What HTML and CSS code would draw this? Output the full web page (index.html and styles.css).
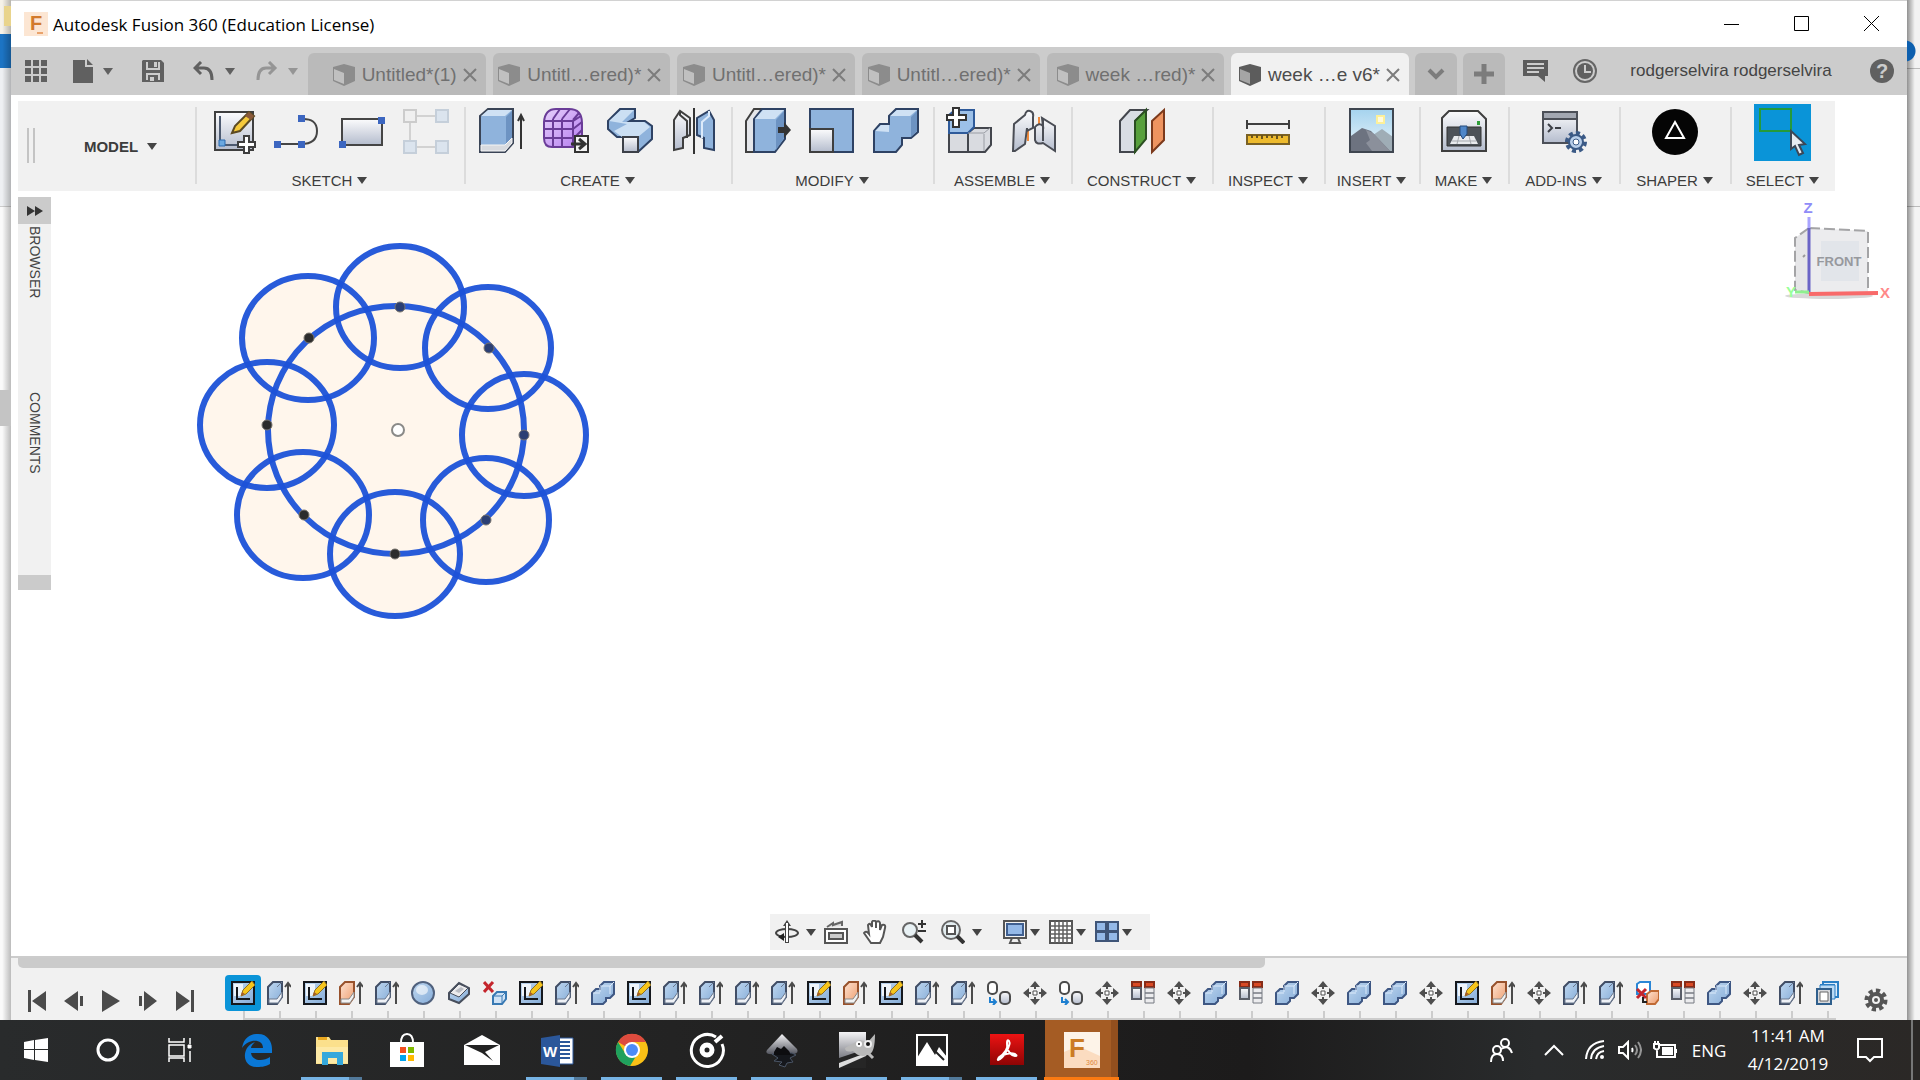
FILE: index.html
```
<!DOCTYPE html>
<html lang="en">
<head>
    <meta charset="UTF-8">
    <meta name="viewport" content="width=device-width, initial-scale=1.0">
    <title>Autodesk Fusion 360 (Education License)</title>
    <link rel="stylesheet" href="styles.css">
</head>
<body>

    <!-- Shared icon shapes -->
    <svg class="defs" aria-hidden="true">
        <defs>
            <linearGradient id="steel" x1="0" y1="0" x2="0" y2="1"><stop offset="0" stop-color="#fcfcfd"/><stop offset="1" stop-color="#b4bccd"/></linearGradient>
            <linearGradient id="blue" x1="0" y1="0" x2="1" y2="1"><stop offset="0" stop-color="#c0d8f0"/><stop offset="1" stop-color="#85acd8"/></linearGradient>
            <linearGradient id="orange" x1="0" y1="0" x2="1" y2="1"><stop offset="0" stop-color="#fde3d2"/><stop offset="1" stop-color="#ee9c6c"/></linearGradient>
            <linearGradient id="purple" x1="0" y1="0" x2="1" y2="1"><stop offset="0" stop-color="#e6d0fb"/><stop offset="1" stop-color="#b67df0"/></linearGradient>
            <linearGradient id="sky" x1="0" y1="0" x2="0" y2="1"><stop offset="0" stop-color="#a5d3ee"/><stop offset="1" stop-color="#eaf5fa"/></linearGradient>
            <linearGradient id="red" x1="0" y1="0" x2="0" y2="1"><stop offset="0" stop-color="#ec1313"/><stop offset="1" stop-color="#8e0404"/></linearGradient>
            <linearGradient id="metal" x1="0" y1="0" x2="0" y2="1"><stop offset="0" stop-color="#f4f4f6"/><stop offset="1" stop-color="#4c4e58"/></linearGradient>
        </defs>

        <symbol id="cube" viewBox="0 0 24 24">
            <path d="M1 4 12 1l11 3v14l-11 5L1 18z" fill="currentColor"/>
            <path d="M2 6l10 4v11L2 17z" fill="#fff" opacity=".45"/>
        </symbol>
        <symbol id="close" viewBox="0 0 14 14"><path d="M1 1l12 12M13 1 1 13" stroke="currentColor" stroke-width="2"/></symbol>

        <symbol id="t-sketch" viewBox="0 0 24 24">
            <path d="M1 1h22v22H1z" fill="url(#blue)" stroke="#15181d" stroke-width="2"/>
            <path d="M3 3h9v12H3z" fill="#fff" opacity=".8"/>
            <path d="M6 6v12h13" fill="none" stroke="#15181d" stroke-width="2"/>
            <path d="M10 15l2-6 9-9 3 4-9 9z" fill="#f6c51c" stroke="#8e7021"/>
            <path d="M10 15l1-4 3 2z" fill="#a85c28"/>
        </symbol>
        <symbol id="t-extrude" viewBox="0 0 24 24">
            <path d="M1 6l5-5h9v15l-5 7H1z" fill="url(#blue)" stroke="#414e66" stroke-width="2"/>
            <path d="M10 6l5-5M2 18h8l5-7v5l-4 6H2z" fill="#eef1f6" stroke="#6c7a90"/>
            <path d="M21 23V2m-3 4 3-4 3 4" fill="none" stroke="#4b4b4b" stroke-width="2"/>
        </symbol>
        <symbol id="t-extrude2" viewBox="0 0 24 24">
            <path d="M1 6l5-5h9v15l-5 7H1z" fill="url(#orange)" stroke="#98522c" stroke-width="2"/>
            <path d="M2 18h8l5-7v5l-4 6H2z" fill="#f2f2f2" stroke="#8a8a8a"/>
            <path d="M21 23V2m-3 4 3-4 3 4" fill="none" stroke="#4b4b4b" stroke-width="2"/>
        </symbol>
        <symbol id="t-sphere" viewBox="0 0 24 24">
            <circle cx="12" cy="12" r="11" fill="url(#blue)" stroke="#50617d" stroke-width="2"/>
            <ellipse cx="11" cy="9" rx="6" ry="5" fill="#fff" opacity=".6"/>
        </symbol>
        <symbol id="t-slab" viewBox="0 0 24 24">
            <path d="M2 12 12 2l10 5v6L12 22 2 18z" fill="url(#blue)" stroke="#474e5c" stroke-width="2"/>
            <path d="M3 12 12 3l9 4-9 9z" fill="#ebebed" stroke="#474e5c"/>
            <path d="M8 10l6-4 3 2-5 4z" fill="#b9bcc3"/>
        </symbol>
        <symbol id="t-remove" viewBox="0 0 24 24">
            <path d="M1 1l9 10M10 1 1 11" stroke="#c4252c" stroke-width="3"/>
            <path d="M10 15l4-4h9v7l-4 5h-9z" fill="#cfe2f5" stroke="#3879b3" stroke-width="2"/>
            <path d="M10 15h9v8m0-8 4-4" fill="none" stroke="#3879b3"/>
        </symbol>
        <symbol id="t-remove2" viewBox="0 0 24 24">
            <path d="M2 3l3-2h10v12H2z" fill="#fff" stroke="#2a86d6" stroke-width="2"/>
            <path d="M12 13l4-3h8v8l-4 5h-8z" fill="url(#orange)" stroke="#c06a34" stroke-width="2"/>
            <path d="M2 8l9 9M11 8l-9 9" stroke="#c4252c" stroke-width="3"/>
            <path d="M8 16v5h4" fill="none" stroke="#222" stroke-width="2"/>
        </symbol>
        <symbol id="t-combine" viewBox="0 0 24 24">
            <path d="M1 12l4-4h4V5l4-4h10v12l-4 4h-4v3l-3 3H1z" fill="url(#blue)" stroke="#3e5783" stroke-width="2"/>
            <path d="M2 12h7M9 6v5M19 5l4-4M9 5h10v8" fill="none" stroke="#dceafa"/>
        </symbol>
        <symbol id="t-copy" viewBox="0 0 24 24">
            <rect x="1" y="1" width="9" height="12" rx="4" fill="#fff" stroke="#4b4b4b" stroke-width="2"/>
            <path d="M3 16v5h6m-3-3 3 3-3 3" fill="none" stroke="#1e7fd0" stroke-width="2"/>
            <rect x="13" y="11" width="10" height="12" rx="4" fill="url(#steel)" stroke="#4b4b4b" stroke-width="2"/>
        </symbol>
        <symbol id="t-move" viewBox="0 0 24 24">
            <path d="M12 0l5 6H7zM12 24l5-6H7zM0 12l6-5v10zM24 12l-6-5v10z" fill="#4e4e4e"/>
            <path d="M12 4v4m0 8v4M4 12h4m8 0h4" stroke="#4e4e4e" stroke-width="2"/>
            <path d="M10 10h4v4h-4z" fill="#fff" stroke="#4e4e4e" stroke-width="1"/>
        </symbol>
        <symbol id="t-pattern" viewBox="0 0 24 24">
            <path d="M1 1h9v5H1zM14 1h9v5h-9z" fill="#d94a25" stroke="#872c18" stroke-width="2"/>
            <path d="M1 7h9v11H1z" fill="url(#steel)" stroke="#5a5e68" stroke-width="2"/>
            <path d="M14 7h9v5h-9zM14 12h9v5h-9zM14 17h9v5h-9z" fill="#ececee" stroke="#777a82"/>
        </symbol>
        <symbol id="t-blue" viewBox="0 0 24 24">
            <path d="M8 1h15v15h-4V5H8zM5 4h14v14" fill="#dbecfb" stroke="#2a7fc4" stroke-width="2"/>
            <path d="M5 4h15v14h-4V8H5z" fill="#b9daf5" stroke="#2a7fc4"/>
            <path d="M2 8h14v15H2z" fill="#d6d8dc" stroke="#2f5f8c" stroke-width="2"/>
            <path d="M5 11h8v9H5z" fill="#fff" stroke="#666"/>
        </symbol>
    </svg>

    <div class="behind behind-left"></div>

    <main class="window">
        <header class="titlebar">
            <svg class="logo" viewBox="0 0 24 24"><rect width="24" height="24" fill="#fce6d3"/><text class="logo-f" x="6" y="18">F</text><path d="M13 21h6" stroke="#e9a36c" stroke-width="2"/></svg>
            <h1>Autodesk Fusion 360 (Education License)</h1>
            <div class="window-buttons">
                <button type="button" aria-label="Minimize"><svg viewBox="0 0 16 16"><path d="M0 8.500h15" /></svg></button>
                <button type="button" aria-label="Maximize"><svg viewBox="0 0 16 16"><path d="M.5.500h14v14H.5z"/></svg></button>
                <button type="button" aria-label="Close"><svg viewBox="0 0 16 16"><path d="M0 0l15 15M15 0 0 15"/></svg></button>
            </div>
        </header>

        <nav class="appbar">
            <button type="button" class="quick q-grid" aria-label="Data panel"><svg width="22" height="22" viewBox="0 0 22 22" fill="#606060"><path d="M0 0h6v6H0zM8 0h6v6H8zM16 0h6v6h-6zM0 8h6v6H0zM8 8h6v6H8zM16 8h6v6h-6zM0 16h6v6H0zM8 16h6v6H8zM16 16h6v6h-6z"/></svg></button>
            <button type="button" class="quick q-menu" aria-label="File"><svg width="20" height="24" viewBox="0 0 20 24" fill="#606060"><path d="M0 1h12v7h8v16H0zM14 0l6 6h-6z"/></svg><i class="caret"></i></button>
            <button type="button" class="quick q-save" aria-label="Save"><svg width="22" height="22" viewBox="0 0 22 22"><path d="M1 0h18l3 3v19H0V1z" fill="#606060"/><path d="M5 2v7h12V2M5 20v-6h12v6" fill="none" stroke="#ccc" stroke-width="2"/><path d="M12 2h3v5h-3zM8 17h4v4H8z" fill="#ccc"/></svg></button>
            <button type="button" class="quick q-menu" aria-label="Undo"><svg width="22" height="20" viewBox="0 0 22 20"><path d="M8 1 2 7l6 6M2 7h9q8 0 8 12" fill="none" stroke="#606060" stroke-width="3"/></svg><i class="caret"></i></button>
            <button type="button" class="quick q-menu faded" aria-label="Redo"><svg width="22" height="20" viewBox="0 0 22 20"><path d="M13 1l6 6-6 6M19 7h-9Q2 7 2 19" fill="none" stroke="#606060" stroke-width="3"/></svg><i class="caret"></i></button>

            <div class="tabs" id="tabs"></div>

            <button type="button" class="tab-extra" aria-label="All tabs"><svg width="18" height="12" viewBox="0 0 18 12"><path d="M2 2l7 7 7-7" fill="none" stroke="#7c7c7c" stroke-width="4"/></svg></button>
            <button type="button" class="tab-extra" aria-label="New tab"><svg width="20" height="20" viewBox="0 0 20 20"><path d="M10 0v20M0 10h20" stroke="#7c7c7c" stroke-width="5"/></svg></button>
            <button type="button" class="quick q-comment" aria-label="Comments"><svg width="25" height="24" viewBox="0 0 25 24"><path d="M0 1h25v16h-3v6l-7-6H0z" fill="#5c5c5c"/><path d="M4 5h17M4 9h17M4 13h12" stroke="#ccc" stroke-width="2"/></svg></button>
            <button type="button" class="quick q-clock" aria-label="Job status"><svg width="26" height="26" viewBox="0 0 26 26"><circle cx="13" cy="13" r="11" fill="#ccc" stroke="#666" stroke-width="2"/><circle cx="13" cy="13" r="8" fill="#606060"/><path d="M13 7v7h6" fill="none" stroke="#ccc" stroke-width="2"/></svg></button>
            <a href="#" class="user">rodgerselvira rodgerselvira</a>
            <button type="button" class="quick q-help" aria-label="Help"><svg width="24" height="24" viewBox="0 0 24 24"><circle cx="12" cy="12" r="12" fill="#606060"/><text class="help-mark" x="12" y="19">?</text></svg></button>
        </nav>

        <section class="ribbon">
            <div class="group workspace-switch"><span class="grip"></span><button type="button" class="label">MODEL <i class="caret"></i></button></div>

            <div class="group">
                <div class="tools">
                    <button type="button" aria-label="Create sketch"><svg viewBox="0 0 48 48"><path d="M5 5h38v38H5z" fill="url(#steel)" stroke="#3f3f3f" stroke-width="2"/><path d="M10 9v29h28" fill="none" stroke="#4d5a70" stroke-width="2"/><path d="M9 33h6v6H9z" fill="#6aa8e0" stroke="#2a6bb0"/><path d="M22 26l3-7L39 5l5 4-14 15z" fill="#f5c93b" stroke="#5c4a22" stroke-width="2"/><path d="M39 5l5 4-3 4-6-4z" fill="#8b5a3b"/><path d="M34 29h5v6h6v5h-6v6h-5v-6h-6v-5h6z" fill="#fff" stroke="#3f3f3f" stroke-width="2"/></svg></button>
                    <button type="button" aria-label="Line"><svg viewBox="0 0 48 48"><path d="M3 37h24q16 0 16-13T27 12" fill="none" stroke="#454545" stroke-width="2"/><path d="M0 34h7v7H0zM24 34h7v7h-7zM24 8h7v7h-7z" fill="#3c66c0"/></svg></button>
                    <button type="button" aria-label="Rectangle"><svg viewBox="0 0 48 48"><path d="M4 12h40v26H4z" fill="url(#steel)" stroke="#454545" stroke-width="2"/><path d="M1 34h7v7H1zM40 10h7v7h-7z" fill="#3c66c0"/></svg></button>
                    <button type="button" aria-label="Pattern" disabled><svg viewBox="0 0 48 48"><path d="M15 9h18M8 15v18M15 40h18" stroke="#d2d2d2" stroke-width="2"/><path d="M2 3h12v12H2z" fill="#efefef" stroke="#ccc" stroke-width="2"/><path d="M34 3h12v12H34zM2 34h12v12H2zM34 34h12v12H34z" fill="#dbe4ee" stroke="#c5cfda" stroke-width="2"/></svg></button>
                </div>
                <button type="button" class="label">SKETCH <i class="caret"></i></button>
            </div>

            <div class="group">
                <div class="tools">
                    <button type="button" aria-label="Extrude"><svg viewBox="0 0 48 48"><path d="M2 9l8-7h25v34l-8 9H2z" fill="#8fb3dc" stroke="#3a4456" stroke-width="2"/><path d="M3 9l7-6h24l-7 6z" fill="#cfe1f4"/><path d="M28 10l6-6v31l-6 8z" fill="#6d93c2"/><path d="M3 38h24l7-7v5l-7 8H3z" fill="#d7dadf" stroke="#f5f5f5"/><path d="M43 42V9m-3 5 3-6 3 6" fill="none" stroke="#333" stroke-width="2"/></svg></button>
                    <button type="button" aria-label="Create form"><svg viewBox="0 0 48 48"><path d="M2 15Q3 2 14 2h13q13 0 13 14v15q0 9-9 9H10q-8 0-8-9z" fill="url(#purple)" stroke="#6a3c98" stroke-width="2"/><path d="M2 14h29l8-5M2 22h29l9-7M2 31h30l8-8M11 12v28M20 12v28M31 14v26M11 12l7-10M20 12l8-10M31 13l6-7" fill="none" stroke="#6a3c98" stroke-width="2"/><path d="M33 29h13v16H33z" fill="#f4f4f4" stroke="#333" stroke-width="2"/><path d="M29 37h13m-5-5 6 5-6 5" fill="none" stroke="#333" stroke-width="3"/></svg></button>
                    <button type="button" aria-label="Sweep"><svg viewBox="0 0 48 48"><path d="M2 14 14 2h15v9l-5 3h15l7 5v13L32 45h-8l-4-15H11l-9-8z" fill="#8fb3dc" stroke="#2e4264" stroke-width="2"/><path d="M3 14 15 3h13L16 15h22l6 5-12 10H16L8 24l13-7z" fill="#cbdff3"/><path d="M17 30h15v15H17z" fill="url(#steel)" stroke="#3c4048" stroke-width="2"/></svg></button>
                    <button type="button" aria-label="Mirror"><svg viewBox="0 0 48 48"><path d="M4 13l6-9 10 7v17l-7 3v10l-9 2z" fill="url(#steel)" stroke="#3f3f3f" stroke-width="2"/><path d="M10 4v4l7 6v17" fill="none" stroke="#3f3f3f" stroke-width="2"/><path d="M44 13l-5-9-12 7v17l7 3v10l10 2z" fill="#8fb3dc" stroke="#2e4264" stroke-width="2"/><path d="M39 4v5l-7 6v16" fill="none" stroke="#dceafa" stroke-width="2"/><path d="M24 1v46" stroke="#333" stroke-width="2"/></svg></button>
                </div>
                <button type="button" class="label">CREATE <i class="caret"></i></button>
            </div>

            <div class="group">
                <div class="tools">
                    <button type="button" aria-label="Press pull"><svg viewBox="0 0 48 48"><path d="M2 14 10 2h10v43H2z" fill="#e4e6ea" stroke="#3f3f3f" stroke-width="2"/><path d="M10 12l8-10h23v30L31 45H10z" fill="#8fb3dc" stroke="#2e4264" stroke-width="2"/><path d="M11 12l8-9h21l-9 9z" fill="#cfe1f4"/><path d="M32 13l8-9v27l-8 12z" fill="#6d93c2"/><path d="M34 20h6v-5l7 8-7 8v-5h-6z" fill="#333"/></svg></button>
                    <button type="button" aria-label="Shell"><svg viewBox="0 0 48 48"><path d="M2 2h43v43H2z" fill="#8fb3dc" stroke="#2e4264" stroke-width="2"/><path d="M2 22h23v23H2z" fill="url(#steel)" stroke="#3f3f3f" stroke-width="2"/></svg></button>
                    <button type="button" aria-label="Combine"><svg viewBox="0 0 48 48"><path d="M2 24l6-7h9v-8l7-7h22v23l-7 6h-9v7l-6 7H2z" fill="#8fb3dc" stroke="#2e4264" stroke-width="2"/><path d="M3 24l6-6h8v7zM18 9l7-6h20l-7 6z" fill="#cfe1f4"/><path d="M39 10l6-6v20l-6 6z" fill="#6d93c2"/></svg></button>
                </div>
                <button type="button" class="label">MODIFY <i class="caret"></i></button>
            </div>

            <div class="group">
                <div class="tools">
                    <button type="button" aria-label="New component"><svg viewBox="0 0 48 48"><path d="M3 26h19v19H3zM22 26l6-5h17v17l-6 7H22z" fill="#d9dbe0" stroke="#43464d" stroke-width="2"/><path d="M3 8l6-5h19v17l-6 6H3z" fill="#9cc0e8" stroke="#2e5a9a" stroke-width="2"/><path d="M38 26l6-5M38 27v17M22 26h16" fill="none" stroke="#9a9da4"/><path d="M7 1h6v7h7v5h-7v7H7v-7H1V8h6z" fill="#fff" stroke="#333" stroke-width="2"/></svg></button>
                    <button type="button" aria-label="Joint"><svg viewBox="0 0 48 48"><path d="M18 20v14M29 10v12" stroke="#f08a3c" stroke-width="2"/><path d="M4 17l11-9q1-5 5-4 4 1 3 6v11l-6 3v-3l-2 16-10 7H3z" fill="url(#steel)" stroke="#4a4d55" stroke-width="2"/><path d="M25 20q4-5 8-1l-1-8 13 8v25L33 36q-7 2-8-3z" fill="url(#steel)" stroke="#4a4d55" stroke-width="2"/><path d="M33 12v22" stroke="#4a4d55" stroke-width="2"/></svg></button>
                </div>
                <button type="button" class="label">ASSEMBLE <i class="caret"></i></button>
            </div>

            <div class="group">
                <div class="tools"><button type="button" aria-label="Offset plane"><svg viewBox="0 0 48 48"><path d="M2 14 12 3h17L17 14v31H2z" fill="#d9dde4" stroke="#43464d" stroke-width="2"/><path d="M17 14 28 3v29L17 45z" fill="#57a03c" stroke="#2b4f22" stroke-width="2"/><path d="M34 14 46 3v30L34 45z" fill="#ee9460" stroke="#7c3a1c" stroke-width="2"/></svg></button></div>
                <button type="button" class="label">CONSTRUCT <i class="caret"></i></button>
            </div>
            <div class="group">
                <div class="tools"><button type="button" aria-label="Measure"><svg viewBox="0 0 48 48"><path d="M3 13v9m0-5h42m0-4v9" fill="none" stroke="#3f3f3f" stroke-width="2"/><path d="M3 28h42v9H3z" fill="#eebb2e" stroke="#7a6124" stroke-width="2"/><path d="M8 28v3m5-3v3m5-3v4m5-4v3m5-3v3m5-3v4m5-4v3" stroke="#6b541c" stroke-width="2"/></svg></button></div>
                <button type="button" class="label">INSPECT <i class="caret"></i></button>
            </div>
            <div class="group">
                <div class="tools"><button type="button" aria-label="Insert image"><svg viewBox="0 0 48 48"><path d="M2 2h43v43H2z" fill="url(#sky)"/><path d="M29 9h7v7h-7z" fill="#fffbe0" stroke="#fdf09a" stroke-width="2"/><path d="M22 30l12-8 11 8v14H22z" fill="#9fadb6"/><path d="M3 29 14 21l9 3 19 20H3z" fill="#6d7380"/><path d="M18 23l4 10-4 3 6 8h18L25 26z" fill="#8b909b"/><path d="M2 2h43v43H2z" fill="none" stroke="#3f4650" stroke-width="2"/></svg></button></div>
                <button type="button" class="label">INSERT <i class="caret"></i></button>
            </div>
            <div class="group">
                <div class="tools"><button type="button" aria-label="3D print"><svg viewBox="0 0 48 48"><path d="M2 11 9 4h29l8 8v32H2z" fill="url(#steel)" stroke="#3f3f3f" stroke-width="2"/><path d="M7 20h34v19H7z" fill="#4d5258" stroke="#333"/><path d="M14 29h20l4 8H10z" fill="#e8eaed"/><path d="M12 34h24M19 29l-2 8m12-8 2 8" stroke="#a6a9ae"/><path d="M20 19h7v8l-4 5-3-5z" fill="#4e86c8" stroke="#244a7c"/><path d="M37 14h3v4h-3z" fill="#2f9e3a"/></svg></button></div>
                <button type="button" class="label">MAKE <i class="caret"></i></button>
            </div>
            <div class="group">
                <div class="tools"><button type="button" aria-label="Scripts and add-ins"><svg viewBox="0 0 48 48"><path d="M3 5h34v31H3z" fill="url(#steel)" stroke="#4c5058" stroke-width="2"/><path d="M3 5h34v7H3z" fill="#a3a8b2" stroke="#4c5058" stroke-width="2"/><path d="M8 17l4 4-4 4m7-4h6" fill="none" stroke="#3c3f46" stroke-width="2"/><circle cx="36" cy="35" r="9" fill="none" stroke="#3b5a86" stroke-width="4" stroke-dasharray="4 3"/><circle cx="36" cy="35" r="7" fill="#b9cfea" stroke="#3b5a86" stroke-width="2"/><circle cx="36" cy="35" r="3" fill="#fff" stroke="#3b5a86"/></svg></button></div>
                <button type="button" class="label">ADD-INS <i class="caret"></i></button>
            </div>
            <div class="group">
                <div class="tools"><button type="button" aria-label="Shaper"><svg viewBox="0 0 48 48"><circle cx="24" cy="25" r="23" fill="#050505"/><path d="M24 15l9 16H15z" fill="none" stroke="#fff" stroke-width="2"/></svg></button></div>
                <button type="button" class="label">SHAPER <i class="caret"></i></button>
            </div>
            <div class="group">
                <div class="tools"><button type="button" class="selected" aria-label="Select"><svg viewBox="0 0 57 57"><path d="M6 5h31v22H6z" fill="none" stroke="#259a3b" stroke-width="2"/><path d="M37 27v18l4-3 4 9 4-2-4-8 6-1z" fill="#e6ebf2" stroke="#3c4757" stroke-width="2"/></svg></button></div>
                <button type="button" class="label">SELECT <i class="caret"></i></button>
            </div>
        </section>

        <section class="workspace">
            <aside class="browser-panel">
                <button type="button" class="expand" aria-label="Expand"><svg width="16" height="10" viewBox="0 0 16 10"><path d="M0 0l8 5-8 5zM8 0l8 5-8 5z" fill="#333"/></svg></button>
                <a href="#">BROWSER</a>
                <a href="#">COMMENTS</a>
                <span class="panel-end"></span>
            </aside>

            <svg class="sketch" id="sketch" viewBox="196 241 395 380" width="395" height="380"></svg>

            <svg class="viewcube" viewBox="0 0 110 110" width="110" height="110">
                <ellipse cx="44" cy="101" rx="44" ry="3" fill="#d8d8d8"/>
                <path d="M10 43 24 33v65l-14-3z" fill="#e6e6e8"/>
                <path d="M24 33l59 3v61l-59 1z" fill="#ececee"/>
                <path d="M36 46h38v40H36z" fill="#e2e5ea"/>
                <path d="M24 33l59 3v61M24 33 10 43v52l14 3" fill="none" stroke="#a4a4a6" stroke-width="2" stroke-dasharray="11 4"/>
                <path d="M18 62l2-2" stroke="#999" stroke-width="2"/>
                <path d="M24 22v11" stroke="#a9a4ff" stroke-width="3"/><path d="M24 33v65" stroke="#6a64c6" stroke-width="3"/>
                <path d="M24 99l69-1" stroke="#f86a6a" stroke-width="4"/>
                <path d="M10 97h14" stroke="#8ff08f" stroke-width="3"/>
                <text class="axis axis-z" x="23" y="18">Z</text>
                <text class="axis axis-x" x="100" y="103">X</text>
                <text class="axis axis-y" x="6" y="102">Y</text>
                <text class="face" x="54" y="71">FRONT</text>
            </svg>

            <div class="navbar">
                <button type="button" class="nav-orbit" aria-label="Orbit"><svg viewBox="0 0 24 24"><path d="M12 3v20" stroke="#444" stroke-width="4"/><path d="M12 0l4 6H8z" fill="#444"/><ellipse cx="12" cy="13" rx="11" ry="4" fill="none" stroke="#444" stroke-width="2"/><path d="M12 3v19" stroke="#fff" stroke-width="2"/><path d="M3 17l6-4v8z" fill="#222"/></svg><i class="caret"></i></button>
                <button type="button" class="nav-wide" aria-label="Look at"><svg viewBox="0 0 24 24"><path d="M1 9h22v14H1z" fill="#fff" stroke="#555" stroke-width="2"/><path d="M5 13h14v6H5z" fill="#ccc" stroke="#555" stroke-width="2"/><path d="M3 7l6-4v2l9-3v4" fill="#ddd" stroke="#666" stroke-width="2"/></svg></button>
                <button type="button" class="nav-wide" aria-label="Pan"><svg viewBox="0 0 24 24"><path d="M8 23 1 13q2-3 5 1L5 5q2-3 4 2V2q2-3 4 0v6-6q3-2 4 1v7l2-5q4-1 3 3l-2 9-3 6z" fill="#fff" stroke="#555" stroke-width="2"/></svg></button>
                <button type="button" class="nav-wide" aria-label="Zoom"><svg viewBox="0 0 24 24"><circle cx="8" cy="10" r="7" fill="#e8f1f4" stroke="#666" stroke-width="2"/><path d="M13 15l7 7" stroke="#333" stroke-width="4"/><path d="M20 0v8m-4-4h8m-8 7h8" stroke="#333" stroke-width="2"/></svg></button>
                <button type="button" class="nav-fit" aria-label="Fit"><svg viewBox="0 0 24 24"><circle cx="10" cy="10" r="9" fill="#e3edf0" stroke="#666" stroke-width="2"/><path d="M6 6h8v8H6z" fill="#fff" stroke="#555" stroke-width="2"/><path d="M16 16l7 7" stroke="#333" stroke-width="4"/></svg><i class="caret"></i></button>
                <button type="button" class="nav-menu" aria-label="Display settings"><svg viewBox="0 0 24 24"><path d="M1 1h22v17H1z" fill="#f4f4f4" stroke="#555" stroke-width="2"/><path d="M4 4h16v11H4z" fill="#94b9e8" stroke="#3f5f90" stroke-width="2"/><path d="M9 18h6l2 5H7z" fill="#eee" stroke="#555" stroke-width="2"/></svg><i class="caret"></i></button>
                <button type="button" class="nav-menu" aria-label="Grid and snaps"><svg viewBox="0 0 24 24"><path d="M1 1h22v22H1z" fill="#fff" stroke="#555" stroke-width="2"/><path d="M6 1v22m4-22v22m4-22v22m4-22v22M1 6h22M1 10h22M1 14h22M1 18h22" stroke="#606060" stroke-width="1.500"/></svg><i class="caret"></i></button>
                <button type="button" class="nav-menu" aria-label="Viewports"><svg viewBox="0 0 24 24"><path d="M1 2h10v9H1zM13 2h10v9H13zM1 12h10v9H1zM13 12h10v9H13z" fill="#94b9e8" stroke="#3f5578" stroke-width="2"/></svg><i class="caret"></i></button>
            </div>
        </section>

        <section class="timeline">
            <div class="scrollbar"><span class="thumb"></span></div>
            <div class="timeline-row">
                <div class="playback">
                    <button type="button" aria-label="Go to start"><svg viewBox="0 0 20 22"><path d="M1 0h3v22H1zM19 1v20L5 11z"/></svg></button>
                    <button type="button" aria-label="Step back"><svg viewBox="0 0 20 22"><path d="M16 6h3v10h-3zM14 1v20L0 11z"/></svg></button>
                    <button type="button" aria-label="Play"><svg viewBox="0 0 20 22"><path d="M1 0l18 11L1 22z"/></svg></button>
                    <button type="button" aria-label="Step forward"><svg viewBox="0 0 20 22"><path d="M1 6h3v10H1zM6 1l13 10L6 21z"/></svg></button>
                    <button type="button" aria-label="Go to end"><svg viewBox="0 0 20 22"><path d="M16 0h3v22h-3zM1 1v20l14-10z"/></svg></button>
                </div>
                <div class="features" id="features"></div>
                <button type="button" class="settings" aria-label="Timeline settings"><svg width="24" height="24" viewBox="0 0 24 24"><circle cx="12" cy="12" r="9" fill="none" stroke="#555" stroke-width="5" stroke-dasharray="4 3"/><circle cx="12" cy="12" r="6" fill="#f1f1f1" stroke="#555" stroke-width="4"/><circle cx="12" cy="12" r="2" fill="#555"/></svg></button>
            </div>
        </section>
    </main>

    <div class="behind behind-right"></div>

    <footer class="taskbar">
        <button type="button" class="system" aria-label="Start"><svg width="24" height="24" viewBox="0 0 24 24" fill="#fff"><path d="M0 4l10-2v9H0zM11 2l13-2v11H11zM0 12h10v10L0 20zM11 12h13v12l-13-2z"/></svg></button>
        <button type="button" class="system" aria-label="Cortana"><svg width="24" height="24" viewBox="0 0 24 24"><circle cx="12" cy="12" r="10" fill="none" stroke="#fff" stroke-width="3"/></svg></button>
        <button type="button" class="system" aria-label="Task view"><svg width="24" height="24" viewBox="0 0 24 24" fill="none" stroke="#fff"><path d="M1 0v4h15V0M1 7h15v11H1zM1 24v-4h15v4M22 0v6M22 13v11" stroke-width="1.500"/><path d="M20 7h3v3h-3z" fill="#fff"/></svg></button>

        <div class="apps">
            <button type="button" class="app" aria-label="Edge"><svg viewBox="0 0 36 36"><path d="M3 16C5 5 12 2 19 2c10 0 14 8 14 15v4H12c1 8 12 9 19 4v7c-5 3-10 3-14 3C7 35 3 25 8 16c2-3 5-5 8-6-2 2-4 4-4 6h12c0-9-14-10-21 0z" fill="#0a78d7"/></svg></button>
            <button type="button" class="app open stack" aria-label="File Explorer"><svg viewBox="0 0 36 36"><path d="M2 5h13l2 3h17v24H2z" fill="#fbe08c"/><path d="M4 5h9v3H4z" fill="#e9a820"/><path d="M2 15h32v16H2z" fill="#fde9a6"/><path d="M8 33V20h21v13h-6v-7h-9v7z" fill="#35a8dc"/></svg></button>
            <button type="button" class="app" aria-label="Store"><svg viewBox="0 0 36 36"><path d="M12 11q0-9 6-9t6 9" fill="none" stroke="#fff" stroke-width="2"/><path d="M1 10h34v25H1z" fill="#fff"/><path d="M11 15h6v6h-6z" fill="#f25022"/><path d="M19 15h6v6h-6z" fill="#7fba00"/><path d="M11 23h6v6h-6z" fill="#00a4ef"/><path d="M19 23h6v6h-6z" fill="#ffb900"/></svg></button>
            <button type="button" class="app" aria-label="Mail"><svg viewBox="0 0 36 36"><path d="M0 13 18 3l18 10v20H0z" fill="#fff"/><path d="M1 13h34l-14 7 8 9-11-8z" fill="#222"/></svg></button>
            <button type="button" class="app open stack" aria-label="Word"><svg viewBox="0 0 36 36"><path d="M18 6h16v26H18z" fill="#fff" stroke="#2b579a" stroke-width="1"/><path d="M21 10h10M21 14h10M21 18h10M21 22h10M21 26h10" stroke="#2b579a" stroke-width="2"/><path d="M2 6l19-3v32L2 32z" fill="#2b579a"/><text class="word-mark" x="11" y="25">W</text></svg></button>
            <button type="button" class="app open" aria-label="Chrome"><svg viewBox="0 0 36 36"><circle cx="18" cy="18" r="16" fill="#fbc116"/><path d="M18 18 4 10A16 16 0 0 1 32 10H18z" fill="#dd4b3e"/><path d="M4 10A16 16 0 0 0 16 34l8-13-13 0z" fill="#1fa15d"/><circle cx="18" cy="18" r="8" fill="#fff"/><circle cx="18" cy="18" r="6" fill="#4c8bf5"/></svg></button>
            <button type="button" class="app open" aria-label="Groove Music"><svg viewBox="0 0 36 36"><path d="M27 5A16 16 0 1 0 33 12" fill="none" stroke="#fff" stroke-width="3"/><circle cx="18" cy="18" r="5" fill="none" stroke="#fff" stroke-width="5"/><path d="M26 10l7-6" stroke="#fff" stroke-width="4"/></svg></button>
            <button type="button" class="app open" aria-label="Inkscape"><svg viewBox="0 0 36 36"><path d="M18 2l15 15q2 4-3 5l-12 1-13-1q-4-1-2-4z" fill="url(#metal)"/><path d="M8 22l20-1 4 2-6 3 3 4-6 1-2 4-6-2 3-3-8-1 4-3z" fill="#15171c" stroke="#4a5566"/><path d="M10 20l3-5 4 2 3-3 5 5 2 4H10z" fill="#0d0d10"/></svg></button>
            <button type="button" class="app open" aria-label="GIMP"><svg viewBox="0 0 36 36"><path d="M0 0h27v36H0z" fill="url(#metal)"/><path d="M0 26l27-9v19H0z" fill="#262626"/><path d="M0 31l27-10v3L0 36z" fill="#ddd"/><path d="M13 12l8-4 8 2 7-8q0 17-5 20-10 5-17-3-8 2-8-3z" fill="#b9b9b9"/><circle cx="20" cy="12" r="3" fill="#fff"/><circle cx="29" cy="12" r="4" fill="#eee"/><circle cx="20" cy="12" r="1" fill="#111"/><circle cx="29" cy="12" r="2" fill="#111"/><path d="M28 20l6 6" stroke="#bbb" stroke-width="3"/></svg></button>
            <button type="button" class="app open stack" aria-label="Photos"><svg viewBox="0 0 36 36"><path d="M3 3h30v30H3z" fill="#222" stroke="#fff" stroke-width="2"/><path d="M3 26 13 10l8 13 4-8 8 10v9H3z" fill="#fff"/><path d="M21 19l9 9" stroke="#222" stroke-width="2"/></svg></button>
            <button type="button" class="app open" aria-label="Acrobat Reader"><svg viewBox="0 0 36 36"><path d="M1 2h34v31H1z" fill="url(#red)"/><path d="M9 26q11-7 9-15 0-4 2-2 2 3-3 11-4 7-8 8-1-1 3-4 8-4 14-2 3 2 0 2-6-1-8-9" fill="none" stroke="#fff" stroke-width="2"/></svg></button>
            <button type="button" class="app active" aria-label="Fusion 360"><svg viewBox="0 0 36 36"><path d="M0 0h36v36H0z" fill="#fdf3e8"/><path d="M0 20l14-6 22 10v12H0z" fill="#fbdcc0"/><text class="task-f" x="5" y="25">F</text><text class="task-360" x="22" y="33">360</text></svg></button>
        </div>

        <div class="tray">
            <button type="button" class="tray-people" aria-label="People"><svg width="24" height="26" viewBox="0 0 24 26"><circle cx="16" cy="6" r="4"/><circle cx="8" cy="13" r="4"/><path d="M2 25q0-8 6-8t6 7M12 12q8-5 11 4"/></svg></button>
            <button type="button" class="tray-more" aria-label="Hidden icons"><svg width="20" height="12" viewBox="0 0 20 12"><path d="M1 11l9-9 9 9"/></svg></button>
            <button type="button" class="tray-icon" aria-label="Network"><svg width="20" height="20" viewBox="0 0 20 20"><path d="M1 19Q2 3 19 1M6 19Q7 8 19 6M11 19q1-7 8-8"/><circle cx="17" cy="17" r="2" fill="#fff" stroke="none"/></svg></button>
            <button type="button" class="tray-icon" aria-label="Volume"><svg width="24" height="20" viewBox="0 0 24 20"><path d="M1 7h4l5-5v16l-5-5H1zM14 8q1 2 0 4"/><path d="M17 5q4 5 0 10M20 2q6 8 0 16" opacity=".5"/></svg></button>
            <button type="button" class="tray-icon" aria-label="Battery"><svg width="24" height="18" viewBox="0 0 24 18"><path d="M7 4h15v12H4v-5M1 3h5v4q-2 3-5 0zM2 0v3M5 0v3M4 8v8M23 8v4"/><path d="M10 7h9v6h-9z" fill="#fff"/></svg></button>
            <button type="button" class="tray-lang">ENG</button>
            <button type="button" class="tray-clock"><span>11:41 AM</span><span>4/12/2019</span></button>
            <button type="button" class="tray-notes" aria-label="Notifications"><svg width="26" height="26" viewBox="0 0 26 26"><path d="M1 2h24v18h-8l-4 4-4-4H1z"/></svg></button>
            <span class="peek"></span>
        </div>
    </footer>

    <script>
        var tabs = ["Untitled*(1)", "Untitl…ered)*", "Untitl…ered)*", "Untitl…ered)*", "week …red)*", "week …e v6*"];
        document.getElementById("tabs").innerHTML = tabs.map(function (name, i) {
            return '<div class="tab' + (i === tabs.length - 1 ? ' current' : '') + '">' +
                '<svg class="tab-cube"><use href="#cube"/></svg><a href="#">' + name + '</a>' +
                '<button type="button" aria-label="Close tab"><svg class="tab-close"><use href="#close"/></svg></button></div>';
        }).join("");

        // Feature history, left to right
        var history360 = ("sketch extrude sketch extrude2 extrude sphere slab remove sketch extrude combine sketch " +
            "extrude extrude extrude extrude sketch extrude2 sketch extrude extrude copy move copy move pattern move " +
            "combine pattern combine move combine combine move sketch extrude2 move extrude extrude remove2 pattern " +
            "combine move extrude blue").split(" ");
        document.getElementById("features").innerHTML = history360.map(function (type, i) {
            return '<button type="button" class="feature' + (i === 0 ? ' selected' : '') + '" aria-label="' + type + '">' +
                '<svg><use href="#t-' + type + '"/></svg></button>';
        }).join("");

        // Sketch ellipses: cx, cy, rx, ry
        var profiles = [
            [396, 430, 128, 124], [400, 307, 64, 61], [488, 348, 63, 61], [524, 435, 62, 61], [486, 520, 63, 62],
            [395, 554, 65, 62], [303, 515, 66, 63], [267, 425, 67, 63], [308, 338, 66, 62]
        ];
        var points = [[400, 307], [489, 348], [524, 435], [486, 520], [395, 554], [304, 515], [267, 425], [309, 338]];
        function ellipses(cls) {
            return profiles.map(function (p) {
                return '<ellipse class="' + cls + '" cx="' + p[0] + '" cy="' + p[1] + '" rx="' + p[2] + '" ry="' + p[3] + '"/>';
            }).join("");
        }
        document.getElementById("sketch").innerHTML = ellipses("profile") + ellipses("curve") +
            points.map(function (p, i) {
                return '<circle class="point' + (i < 4 ? ' under' : '') + '" cx="' + p[0] + '" cy="' + p[1] + '" r="5"/>';
            }).join("") +
            '<circle class="origin" cx="398" cy="430" r="6"/>';
    </script>

</body>
</html>
```
FILE: styles.css
```
* {
    box-sizing: border-box;
}

body {
    margin: 0;
    height: 100vh;
    display: grid;
    grid-template-columns: 11px 1fr 13px;
    grid-template-rows: 1fr 60px;
    font-family: "Liberation Sans", Arial, sans-serif;
    color: #444;
    overflow: hidden;
}

button {
    display: flex;
    align-items: center;
    justify-content: center;
    padding: 0;
    border: 0;
    background: none;
    font: inherit;
    color: inherit;
}

a {
    color: inherit;
    text-decoration: none;
}

.defs {
    position: absolute;
    width: 0;
    height: 0;
}

.caret {
    width: 0;
    border: 5px solid transparent;
    border-top: 7px solid #444;
    border-bottom: 0;
}

/* Slivers of the window behind */
.behind-left {
    background:
        linear-gradient(#e9d48c, #e9d48c) 4px 6px / 7px 20px no-repeat,
        linear-gradient(#c4c4c4, #c4c4c4) 0 390px / 11px 36px no-repeat,
        linear-gradient(90deg, transparent 20%, rgba(0, 0, 0, .25)),
        linear-gradient(#f6f2e8 34px, #1c74c4 34px, #1c74c4 68px, #eef0f3 68px, #eef0f3 206px, #ccc 206px, #ccc 207px, #fafafa 207px);
}

.behind-right {
    background:
        radial-gradient(circle at -2px 51px, #0d5fae 10px, transparent 11px),
        linear-gradient(90deg, rgba(0, 0, 0, .4), transparent 60%),
        linear-gradient(#f2f2f2 68px, #bbb 68px, #bbb 69px, #f2f2f2 69px, #f2f2f2 206px, #bbb 206px, #bbb 207px, #f4f4f4 207px);
}

.window {
    display: flex;
    flex-direction: column;
    min-width: 0;
    background: #fff;
    border-top: 1px solid #d2d2d2;
}

/* Title bar */
.titlebar {
    display: flex;
    align-items: center;
    height: 46px;
    padding-left: 13px;
}

.logo {
    width: 24px;
    height: 24px;
}

.logo-f {
    font-size: 20px;
    font-weight: bold;
    fill: #d27a2c;
}

.titlebar h1 {
    margin: 0 0 0 5px;
    font: 17px "Open Sans", "Noto Sans", sans-serif;
    color: #000;
}

.window-buttons {
    display: flex;
    margin-left: auto;
}

.window-buttons button {
    width: 70px;
    height: 46px;
}

.window-buttons svg {
    width: 16px;
    height: 16px;
    fill: none;
    stroke: #000;
}

/* Tabs and quick access */
.appbar {
    display: flex;
    align-items: center;
    height: 48px;
    background: #ccc;
}

.quick {
    flex: none;
    gap: 10px;
}

.quick .caret {
    border-top-color: #606060;
}

.q-grid {
    width: 50px;
}

.q-menu {
    width: 63px;
}

.q-save {
    width: 58px;
}

.q-comment {
    width: 60px;
}

.q-clock {
    width: 40px;
}

.q-help {
    width: 50px;
}

.faded {
    opacity: .5;
}

.help-mark {
    font-size: 20px;
    font-weight: bold;
    fill: #ccc;
    text-anchor: middle;
}

.tabs {
    flex: 1;
    align-self: flex-end;
    display: flex;
    gap: 7px;
    min-width: 0;
}

.tab {
    flex: 1;
    display: flex;
    align-items: center;
    justify-content: flex-end;
    gap: 6px;
    height: 42px;
    padding: 2px 9px 0 0;
    border-radius: 6px 6px 0 0;
    background: #bababa;
    color: #707070;
    font-size: 19px;
    white-space: nowrap;
}

.tab.current {
    background: #f1f1f1;
    color: #4c4c4c;
}

.tab-cube {
    width: 24px;
    height: 24px;
    color: #8c8c8c;
}

.current .tab-cube {
    color: #5c5c5c;
}

.tab-close {
    width: 14px;
    height: 14px;
    color: #7c7c7c;
}

.tab-extra {
    align-self: flex-end;
    width: 42px;
    height: 42px;
    margin-left: 6px;
    border-radius: 6px 6px 0 0;
    background: #bababa;
}

.user {
    width: 252px;
    text-align: center;
    font-size: 17px;
    white-space: nowrap;
}

/* Ribbon */
.ribbon {
    display: grid;
    grid-template-columns: 177fr 269fr 267fr 202fr 138fr 141fr 112fr 95fr 89fr 111fr 111fr 105fr;
    height: 90px;
    margin: 6px 72px 0 7px;
    background: #f1f1f1;
}

.group {
    position: relative;
    display: flex;
    flex-direction: column;
    align-items: center;
    justify-content: space-between;
    padding-top: 6px;
}

.group + .group::before {
    content: "";
    position: absolute;
    left: 0;
    top: 6px;
    bottom: 7px;
    width: 2px;
    background: #dcdcdc;
}

.tools {
    display: flex;
    gap: 16px;
}

.tools button,
.tools svg {
    width: 48px;
    height: 48px;
}

.tools .selected,
.tools .selected svg {
    width: 57px;
    height: 57px;
}

.tools .selected {
    margin: -3px 0 -6px;
    background: #0a94d8;
}

.label {
    gap: 5px;
    height: 22px;
    font-size: 15px;
    color: #3c3c3c;
}

.workspace-switch {
    flex-direction: row;
    justify-content: center;
    padding: 0;
}

.workspace-switch .label {
    gap: 9px;
    margin-left: 28px;
    font-weight: bold;
}

.grip {
    position: absolute;
    left: 9px;
    top: 27px;
    width: 8px;
    height: 35px;
    border: solid #c4c4c4;
    border-width: 0 2px;
}

/* Canvas */
.workspace {
    position: relative;
    flex: 1;
    padding: 6px 0 0 7px;
}

.browser-panel {
    display: flex;
    flex-direction: column;
    align-items: center;
    width: 33px;
    height: 393px;
    background: #f1f1f1;
    font-size: 14px;
}

.browser-panel a {
    height: 166px;
    padding-top: 2px;
    writing-mode: vertical-rl;
}

.expand {
    width: 33px;
    height: 27px;
    flex: none;
    background: #cbcbcb;
}

.panel-end {
    width: 33px;
    height: 15px;
    margin-top: auto;
    background: #cbcbcb;
}

.sketch {
    position: absolute;
    left: 185px;
    top: 50px;
}

.profile {
    fill: #fff6ec;
}

.curve {
    fill: none;
    stroke: #1c52d8;
    stroke-width: 6px;
    stroke-opacity: .95;
}

.point {
    fill: #2c2c2c;
    stroke: #77736c;
}

.point.under {
    fill: #2b3f74;
}

.origin {
    fill: #fff;
    stroke: #8a8a88;
    stroke-width: 2px;
}

.viewcube {
    position: absolute;
    right: 12px;
    top: 4px;
}

.axis,
.face {
    font-size: 15px;
    font-weight: bold;
    text-anchor: middle;
}

.axis-x {
    fill: #f88;
}

.axis-y {
    fill: #9f9;
}

.axis-z {
    fill: #8f8cf8;
}

.face {
    font-size: 13px;
    fill: #97999e;
}

.navbar {
    position: absolute;
    left: 50%;
    bottom: 6px;
    display: flex;
    width: 380px;
    height: 36px;
    margin-left: -189px;
    padding-left: 5px;
    background: #f1f1f1;
}

.navbar button {
    justify-content: flex-start;
}

.navbar svg {
    width: 24px;
    height: 24px;
}

.nav-orbit {
    gap: 7px;
    width: 49px;
}

.nav-wide {
    width: 39px;
}

.nav-fit {
    gap: 7px;
    width: 62px;
}

.nav-menu {
    gap: 3px;
    width: 46px;
}

/* Timeline */
.timeline {
    height: 64px;
    border-top: 2px solid #ccc;
    background: #f1f1f1;
}

.scrollbar {
    height: 10px;
    padding-left: 7px;
}

.thumb {
    display: block;
    width: 66%;
    height: 10px;
    border-radius: 0 0 5px 5px;
    background: #cbcbcb;
}

.timeline-row {
    display: flex;
    height: 52px;
    padding-left: 16px;
}

.playback {
    display: flex;
    gap: 17px;
    margin-top: 12px;
    height: 42px;
}

.playback svg {
    width: 20px;
    height: 22px;
    fill: #4b4b4b;
}

.features {
    flex: 1;
    display: flex;
    margin-left: 30px;
    padding-top: 7px;
}

.feature {
    position: relative;
    flex: 1;
    height: 36px;
}

.feature svg {
    width: 24px;
    height: 24px;
}

.feature.selected {
    border-radius: 4px;
    background: #0a94d8;
}

/* tick and base line under each feature */
.feature::before {
    content: "";
    position: absolute;
    left: 50%;
    top: 36px;
    width: 2px;
    height: 9px;
    background: #ccc;
}

.feature::after {
    content: "";
    position: absolute;
    left: 0;
    right: 0;
    top: 43px;
    height: 2px;
    background: #ccc;
}

.feature:first-child::after {
    left: 50%;
}

.feature:last-child::after {
    right: 25%;
}

.settings {
    width: 62px;
    height: 64px;
}

/* Taskbar */
.taskbar {
    grid-column: 1 / -1;
    display: flex;
    background: linear-gradient(90deg, #292b2c, #232323 35%, #1c1b1b 65%, #292b2c 80%, #2b2826);
    color: #fff;
    font-family: "Open Sans", "Noto Sans", sans-serif;
    font-size: 17px;
}

.system {
    width: 72px;
}

.apps {
    display: flex;
    margin-left: 3px;
}

.app {
    position: relative;
    width: 75px;
}

.app svg {
    width: 36px;
    height: 36px;
}

.app.open::after {
    content: "";
    position: absolute;
    left: 7px;
    right: 7px;
    bottom: 0;
    height: 3px;
    background: #76b3e4;
}

.app.stack::after {
    background: linear-gradient(90deg, #76b3e4 48px, #52799a 48px);
}

.app.active {
    background: linear-gradient(90deg, transparent 1px, #a55c24 1px, #a55c24 67px, #924f1e 67px, #924f1e 74px, transparent 74px);
    box-shadow: inset 0 -3px #fa7a12;
}

.word-mark {
    font: bold 15px "Liberation Sans", sans-serif;
    fill: #fff;
    text-anchor: middle;
}

.task-f {
    font: bold 26px "Liberation Sans", sans-serif;
    fill: #cc7c24;
}

.task-360 {
    font: 7px "Liberation Sans", sans-serif;
    fill: #e0883c;
}

.tray {
    display: flex;
    margin-left: auto;
}

.tray svg {
    fill: none;
    stroke: #fff;
    stroke-width: 2px;
}

.tray-people {
    width: 60px;
}

.tray-more {
    width: 46px;
}

.tray-icon {
    width: 35px;
}

.tray-lang {
    width: 54px;
}

.tray-clock {
    flex-direction: column;
    gap: 4px;
    width: 104px;
    line-height: 24px;
}

.tray-notes {
    width: 60px;
}

.peek {
    width: 9px;
    margin-left: 11px;
    border-left: 2px solid #777;
}
```
